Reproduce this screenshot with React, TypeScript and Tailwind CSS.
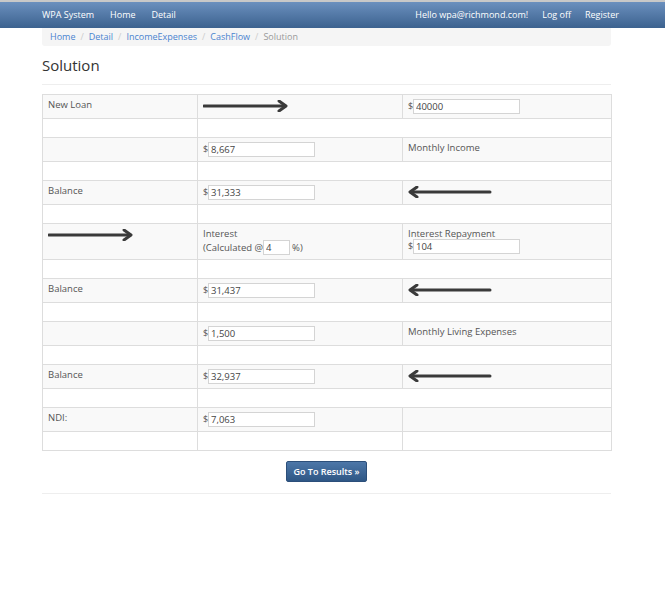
import React from 'react';

const font = { fontFamily: '"Open Sans", "Liberation Sans", sans-serif' };

const Arrow: React.FC<{ dir: 'left' | 'right' }> = ({ dir }) => (
  <svg width="85" height="12" viewBox="0 0 85 12" className="block">
    {dir === 'right' ? (
      <>
        <line x1="1" y1="6" x2="82" y2="6" stroke="#3a3a3a" strokeWidth="3" strokeLinecap="round" />
        <polyline points="76,1 83,6 76,11" fill="none" stroke="#3a3a3a" strokeWidth="3" strokeLinejoin="round" strokeLinecap="round" />
      </>
    ) : (
      <>
        <line x1="3" y1="6" x2="82" y2="6" stroke="#3a3a3a" strokeWidth="3" strokeLinecap="round" />
        <polyline points="9,1 2,6 9,11" fill="none" stroke="#3a3a3a" strokeWidth="3" strokeLinejoin="round" strokeLinecap="round" />
      </>
    )}
  </svg>
);

const Money: React.FC<{ value: string }> = ({ value }) => (
  <div className="flex items-center">
    <span className="text-[9px] text-[#555] -mt-[3px] w-[5px]">$</span>
    <input
      readOnly
      value={value}
      className="w-[107px] h-[15px] border border-[#d4d4d4] bg-white px-[2px] text-[9.5px] text-[#444] outline-none"
      style={font}
    />
  </div>
);

const td = 'border border-[#dddddd] px-[5px] pt-[4px] align-top';

const Spacer: React.FC<{ three?: boolean }> = ({ three }) =>
  three ? (
    <tr className="h-[19px] bg-white">
      <td className={td} />
      <td className={td} />
      <td className={td} />
    </tr>
  ) : (
    <tr className="h-[19px] bg-white">
      <td className={td} />
      <td className={td} colSpan={2} />
    </tr>
  );

export default function App() {
  return (
    <div className="min-h-[614px] bg-white text-[#555]" style={font}>
      <div className="h-[28px] border-t-2 border-[#c8c8c8] bg-gradient-to-b from-[#6b90be] to-[#3c628f] flex items-center pl-[42px] pr-[46px] text-white text-[9px]">
        <span className="mr-[16px]">WPA System</span>
        <span className="mr-[16px]">Home</span>
        <span>Detail</span>
        <span className="ml-auto mr-[14px]">Hello wpa@richmond.com!</span>
        <span className="mr-[14px]">Log off</span>
        <span>Register</span>
      </div>

      <div className="ml-[42px] w-[569px]">
        <div className="h-[18px] bg-[#f5f5f5] rounded-b-[3px] flex items-center px-[8px] text-[9px] gap-[5px]">
          <span className="text-[#4a84d0]">Home</span>
          <span className="text-[#ccc]">/</span>
          <span className="text-[#4a84d0]">Detail</span>
          <span className="text-[#ccc]">/</span>
          <span className="text-[#4a84d0]">IncomeExpenses</span>
          <span className="text-[#ccc]">/</span>
          <span className="text-[#4a84d0]">CashFlow</span>
          <span className="text-[#ccc]">/</span>
          <span className="text-[#999]">Solution</span>
        </div>

        <h2 className="text-[15px] text-[#333] mt-[9px] leading-[20px]">Solution</h2>
        <div className="mt-[9px] border-t border-[#eee]" />

        <table className="mt-[9px] w-[569px] border-collapse table-fixed text-[9.5px] text-[#555] leading-[11px]">
          <colgroup>
            <col className="w-[155px]" />
            <col className="w-[205px]" />
            <col className="w-[209px]" />
          </colgroup>
          <tbody>
            <tr className="h-[24px] bg-[#f9f9f9]">
              <td className={td}>New Loan</td>
              <td className={td}><div className="mt-[1px]"><Arrow dir="right" /></div></td>
              <td className={td}><Money value="40000" /></td>
            </tr>
            <Spacer />
            <tr className="h-[24px] bg-[#f9f9f9]">
              <td className={td} />
              <td className={td}><Money value="8,667" /></td>
              <td className={td}>Monthly Income</td>
            </tr>
            <Spacer />
            <tr className="h-[24px] bg-[#f9f9f9]">
              <td className={td}>Balance</td>
              <td className={td}><Money value="31,333" /></td>
              <td className={td}><div className="mt-[1px]"><Arrow dir="left" /></div></td>
            </tr>
            <Spacer />
            <tr className="h-[36px] bg-[#f9f9f9]">
              <td className={td}><div className="mt-[1px]"><Arrow dir="right" /></div></td>
              <td className={td}>
                <div>Interest</div>
                <div className="flex items-center mt-[1px]">
                  <span>(Calculated @</span>
                  <input
                    readOnly
                    value="4"
                    className="w-[27px] h-[15px] border border-[#d4d4d4] bg-white px-[2px] text-[9.5px] text-[#444] outline-none"
                    style={font}
                  />
                  <span className="ml-[2px]">%)</span>
                </div>
              </td>
              <td className={td}>
                <div>Interest Repayment</div>
                <Money value="104" />
              </td>
            </tr>
            <Spacer />
            <tr className="h-[24px] bg-[#f9f9f9]">
              <td className={td}>Balance</td>
              <td className={td}><Money value="31,437" /></td>
              <td className={td}><div className="mt-[1px]"><Arrow dir="left" /></div></td>
            </tr>
            <Spacer />
            <tr className="h-[24px] bg-[#f9f9f9]">
              <td className={td} />
              <td className={td}><Money value="1,500" /></td>
              <td className={td}>Monthly Living Expenses</td>
            </tr>
            <Spacer />
            <tr className="h-[24px] bg-[#f9f9f9]">
              <td className={td}>Balance</td>
              <td className={td}><Money value="32,937" /></td>
              <td className={td}><div className="mt-[1px]"><Arrow dir="left" /></div></td>
            </tr>
            <Spacer />
            <tr className="h-[24px] bg-[#f9f9f9]">
              <td className={td}>NDI:</td>
              <td className={td}><Money value="7,063" /></td>
              <td className={td} />
            </tr>
            <Spacer three />
          </tbody>
        </table>

        <div className="flex justify-center mt-[10px]">
          <button className="h-[21px] px-[6px] rounded-[2px] border border-[#2c4f7a] bg-gradient-to-b from-[#4d77a8] to-[#2f5785] text-white text-[9px] font-semibold" style={font}>
            Go To Results »
          </button>
        </div>
        <div className="mt-[11px] border-t border-[#eee]" />
      </div>
    </div>
  );
}
